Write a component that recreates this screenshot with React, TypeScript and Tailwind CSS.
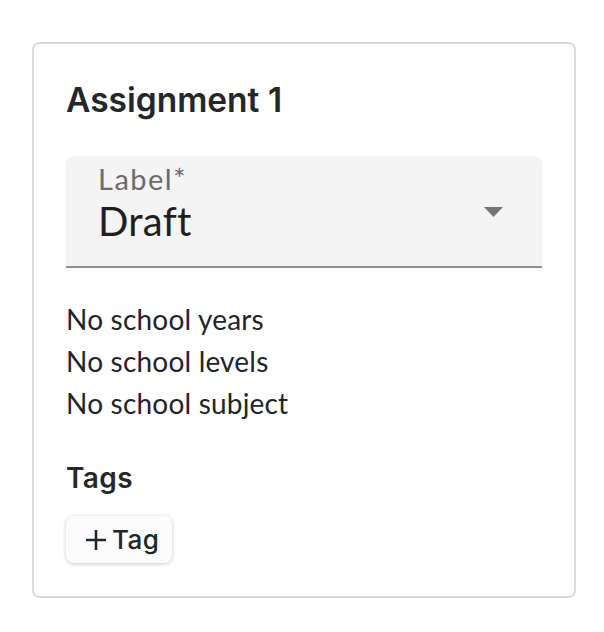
import React from "react"

// Assignment summary card: label select, school meta, tags
const heading = "font-['Inter','Liberation_Sans',sans-serif]"
const body = "font-['Lato','Noto_Sans',sans-serif]"

function LabelSelect({ value }: { value: string }) {
  return (
    <div className="relative flex h-[112px] flex-col rounded-t-[7px] border-b-2 border-[#8c8c8c] bg-[#f4f4f4] pl-[32px] pt-[5px]">
      <span className={`${body} text-[29px] leading-[36px] tracking-[1.5px] text-[#6b6b6b]`}>Label*</span>
      <span className={`${body} mt-[2px] text-[40px] leading-[44px] tracking-[0.3px] text-[#1f1f1f]`}>{value}</span>
      <svg
        width={19}
        height={10}
        viewBox="0 0 19 10"
        className="absolute right-[39px] top-[51px] text-[#757575]"
      >
        <path d="M0 0H19L9.5 10Z" fill="currentColor" />
      </svg>
    </div>
  )
}

function PlusIcon() {
  return (
    <svg width={22} height={22} viewBox="0 0 22 22" className="text-[#212529]">
      <path d="M11 1V21M1 11H21" stroke="currentColor" strokeWidth={2.6} />
    </svg>
  )
}

export default function App() {
  return (
    <div className="min-h-screen bg-white pl-[32px] pt-[42px]">
      <div className="flex w-[544px] flex-col rounded-[8px] border-2 border-[#d8dbdf] px-[32px] pb-[33px] pt-[36px]">
        <h2 className={`${heading} text-[33.5px] font-semibold leading-[40px] text-[#25272a]`}>
          Assignment 1
        </h2>

        <div className="mt-[36px]">
          <LabelSelect value="Draft" />
        </div>

        <div className={`${body} mt-[30px] flex flex-col text-[28px] leading-[42px] tracking-[0.2px] text-[#212529]`}>
          <span>No school years</span>
          <span>No school levels</span>
          <span>No school subject</span>
        </div>

        <h3 className={`${heading} mt-[36px] text-[28px] font-semibold leading-[36px] tracking-[0.4px] text-[#25272a]`}>
          Tags
        </h3>

        <div className="mt-[20px]">
          <button
            type="button"
            className={`${heading} flex h-[47px] w-[106px] items-center gap-[5px] rounded-[8px] bg-[#fcfcfc] pl-[19px] text-[26px] font-medium tracking-[0.5px] text-[#212529] shadow-[0_1px_4px_rgba(0,0,0,0.22)]`}
          >
            <PlusIcon />
            Tag
          </button>
        </div>
      </div>
    </div>
  )
}
